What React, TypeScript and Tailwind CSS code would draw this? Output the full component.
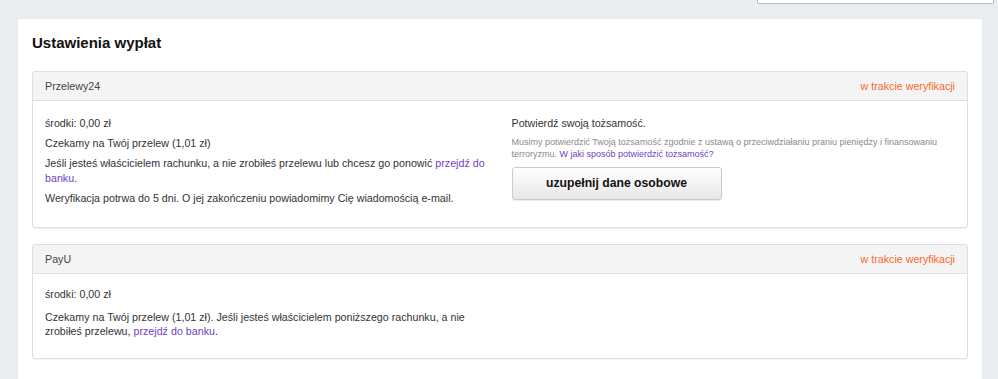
import React from 'react';

const Link = ({ children }: { children: React.ReactNode }) => (
  <a href="#" className="text-[#6f42c1] no-underline">
    {children}
  </a>
);

const PanelHeader = ({ title }: { title: string }) => (
  <div className="flex h-[29px] items-center justify-between border-b border-[#dedede] bg-[#f4f4f4] px-[12px] text-[10.7px]">
    <span className="text-[#444]">{title}</span>
    <span className="text-[#f8692d]">w trakcie weryfikacji</span>
  </div>
);

export default function App() {
  return (
    <div className="min-h-screen bg-[#eaedf0] font-['Liberation_Sans',Arial,sans-serif] text-[#333]">
      <div className="flex justify-end pr-[4px]">
        <div className="h-[4px] w-[237px] rounded-b-[2px] border border-t-0 border-[#bdbdbd] bg-white" />
      </div>

      <div className="ml-[18px] mt-[15px] w-[964px] bg-white px-[14px] pb-[30px] pt-[14px]">
        <h1 className="mb-[18px] h-[20px] text-[15px] font-bold leading-[20px] text-[#111]">Ustawienia wypłat</h1>

        {/* Przelewy24 */}
        <div className="overflow-hidden rounded-[3px] border border-[#dedede] shadow-[0_1px_1px_rgba(0,0,0,0.05)]">
          <PanelHeader title="Przelewy24" />
          <div className="grid grid-cols-2 gap-[23px] px-[12px] pb-[21px] pt-[15px] text-[10.7px] leading-[15px]">
            <div className="flex flex-col gap-[5px]">
              <p>środki: 0,00 zł</p>
              <p>Czekamy na Twój przelew (1,01 zł)</p>
              <p>
                Jeśli jesteś właścicielem rachunku, a nie zrobiłeś przelewu lub chcesz go ponowić{' '}
                <Link>przejdź do banku</Link>.
              </p>
              <p>Weryfikacja potrwa do 5 dni. O jej zakończeniu powiadomimy Cię wiadomością e-mail.</p>
            </div>
            <div className="flex flex-col items-start">
              <p>Potwierdź swoją tożsamość.</p>
              <p className="mt-[6px] text-[9px] leading-[11.5px] text-[#8a8a8a]">
                Musimy potwierdzić Twoją tożsamość zgodnie z ustawą o przeciwdziałaniu praniu pieniędzy i finansowaniu
                terroryzmu. <Link>W jaki sposób potwierdzić tożsamość?</Link>
              </p>
              <button className="mt-[7px] flex h-[33px] w-[210px] items-center justify-center rounded-[3px] border border-[#cbcbcb] bg-gradient-to-b from-white to-[#e7e7e7] text-[12.2px] font-bold text-[#111] shadow-[0_1px_1px_rgba(0,0,0,0.08)]">
                uzupełnij dane osobowe
              </button>
            </div>
          </div>
        </div>

        {/* PayU */}
        <div className="mt-[16px] overflow-hidden rounded-[3px] border border-[#dedede] shadow-[0_1px_1px_rgba(0,0,0,0.05)]">
          <PanelHeader title="PayU" />
          <div className="grid grid-cols-2 gap-[23px] px-[12px] pb-[20px] pt-[13px] text-[10.7px]">
            <div className="flex flex-col gap-[8px]">
              <p className="leading-[15px]">środki: 0,00 zł</p>
              <p className="leading-[14px]">
                Czekamy na Twój przelew (1,01 zł). Jeśli jesteś właścicielem poniższego rachunku, a nie zrobiłeś
                przelewu, <Link>przejdź do banku</Link>.
              </p>
            </div>
            <div />
          </div>
        </div>
      </div>
    </div>
  );
}
